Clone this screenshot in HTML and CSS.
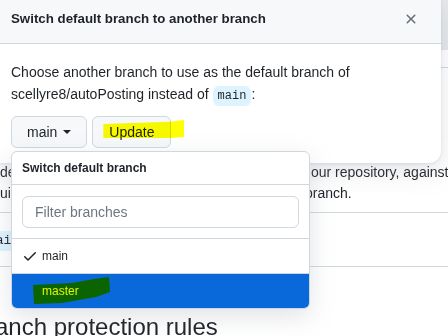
FILE: index.html
```html
<!DOCTYPE html>
<html lang="en">
<head>
    <meta charset="UTF-8">
    <meta name="viewport" content="width=device-width, initial-scale=1.0">
    <title>Default branch</title>
    <link rel="stylesheet" href="styles.css">
</head>
<body>
<div class="page">
    <div class="page-top">
        <div class="edge-btn"></div>
    </div>
    <div class="bg-text">
        <div class="bg-row">
            <span class="bg-left">default branch is considered the base branch in y</span>
            <span class="bg-right">our repository, against which all pull requests</span>
        </div>
        <div class="bg-row">
            <span class="bg-left">uires a different base b</span>
            <span class="bg-right">branch.</span>
        </div>
    </div>
    <div class="bg-code-row">
        <code class="bg-code">main</code>
    </div>
    <h2 class="bg-heading">Branch protection rules</h2>
</div>

<div class="modal">
    <div class="modal-header">
        <h1 class="modal-title">Switch default branch to another branch</h1>
        <button class="close-btn" aria-label="Close">
            <svg width="16" height="16" viewBox="0 0 16 16"><path fill="#656d76" d="M3.72 3.72a.75.75 0 0 1 1.06 0L8 6.94l3.22-3.22a.749.749 0 0 1 1.275.326.749.749 0 0 1-.215.734L9.06 8l3.22 3.22a.749.749 0 0 1-.326 1.275.749.749 0 0 1-.734-.215L8 9.06l-3.22 3.22a.751.751 0 0 1-1.042-.018.751.751 0 0 1-.018-1.042L6.94 8 3.72 4.78a.75.75 0 0 1 0-1.06Z"/></svg>
        </button>
    </div>
    <div class="modal-body">
        <p class="modal-text">Choose another branch to use as the default branch of scellyre8/autoPosting instead of <code class="pill">main</code>:</p>
        <div class="actions">
            <button class="btn">main <span class="caret"></span></button>
            <button class="btn btn-update">Update<span class="marker"></span></button>
        </div>
    </div>
</div>

<div class="dropdown">
    <div class="dropdown-header">Switch default branch</div>
    <div class="dropdown-filter">
        <input class="filter-input" type="text" placeholder="Filter branches">
    </div>
    <div class="dropdown-item">
        <svg class="check" width="16" height="16" viewBox="0 0 16 16"><path fill="#1f2328" d="M13.78 4.22a.75.75 0 0 1 0 1.06l-7.25 7.25a.75.75 0 0 1-1.06 0L2.22 9.28a.751.751 0 0 1 .018-1.042.751.751 0 0 1 1.042-.018L6 10.94l6.72-6.72a.75.75 0 0 1 1.06 0Z"/></svg>
        <span>main</span>
    </div>
    <div class="dropdown-item selected">
        <svg class="scribble" width="80" height="30" viewBox="0 0 80 30"><path fill="#0b6400" d="M1 9 L40 7 L62 3 L77 1 L78 16 L64 21 L30 27 L2 28 Z"/></svg>
        <span class="master-label">master</span>
    </div>
</div>
</body>
</html>
```

FILE: styles.css
```css
body {
    margin: 0;
    width: 448px;
    height: 336px;
    overflow: hidden;
    position: relative;
    background-color: #fff;
    color: #1f2328;
    font-family: "Liberation Sans", Arial, sans-serif;
    font-size: 14px;
}
.page-top {
    height: 67px;
    border-bottom: 1px solid #d0d7de;
    display: flex;
    justify-content: flex-end;
}
.edge-btn {
    width: 7px;
    height: 50px;
    background-color: #e6e8ea;
    border-left: 2px solid #c8ccd0;
}
.bg-text {
    margin-top: 94px;
    padding-bottom: 8px;
    border-bottom: 1px solid #d0d7de;
}
.bg-row {
    display: grid;
    grid-template-columns: 311px 1fr;
    line-height: 21px;
    white-space: nowrap;
}
.bg-row + .bg-row {
    grid-template-columns: 305px 1fr;
}
.bg-left,
.bg-right {
    overflow: hidden;
}
.bg-code-row {
    padding: 18px 0 15px;
    border-bottom: 1px solid #d0d7de;
}
.bg-code {
    display: inline-block;
    margin-left: -16px;
    padding: 0 4px;
    height: 20px;
    line-height: 20px;
    background-color: #ddf4ff;
    border-radius: 6px;
    font-family: "Liberation Mono", monospace;
    font-size: 13px;
}
.bg-heading {
    margin: 45px 0 0 -29px;
    font-size: 24px;
    font-weight: 400;
    line-height: 30px;
}
.modal {
    position: absolute;
    left: 0;
    top: 0;
    width: 441px;
    height: 163px;
    background-color: #fff;
    border-radius: 0 0 12px 0;
    box-shadow: 0 8px 24px rgba(140, 149, 159, 0.25), 0 1px 3px rgba(140, 149, 159, 0.2);
}
.modal-header {
    height: 44px;
    box-sizing: border-box;
    display: flex;
    align-items: center;
    justify-content: space-between;
    padding: 0 22px 0 11px;
    background-color: #f6f8fa;
    border-bottom: 1px solid #d0d7de;
}
.modal-title {
    margin: 0 0 6px 0;
    font-size: 13.3px;
    font-weight: 600;
}
.close-btn {
    border: none;
    background: none;
    padding: 0;
    display: flex;
    margin-bottom: 6px;
}
.modal-body {
    padding: 17px 11px 0;
}
.modal-text {
    margin: 0;
    line-height: 22px;
}
.pill {
    display: inline-block;
    padding: 0 5px;
    line-height: 20px;
    background-color: #ddf4ff;
    border-radius: 6px;
    font-family: "Liberation Mono", monospace;
    font-size: 12px;
    color: #1f2328;
}
.actions {
    display: flex;
    gap: 5px;
    margin-top: 10px;
}
.btn {
    position: relative;
    height: 32px;
    padding: 0 15px;
    display: flex;
    align-items: center;
    gap: 6px;
    background-color: #f6f8fa;
    border: 1px solid #d0d7de;
    border-radius: 6px;
    color: #1f2328;
    font-family: inherit;
    font-size: 14px;
    font-weight: 500;
}
.btn-update {
    width: 79px;
    justify-content: center;
}
.caret {
    width: 0;
    height: 0;
    border-left: 4px solid transparent;
    border-right: 4px solid transparent;
    border-top: 4px solid #1f2328;
}
.marker {
    position: absolute;
    left: 10px;
    top: 3px;
    width: 81px;
    height: 18px;
    background-color: #ffff00;
    mix-blend-mode: multiply;
    clip-path: polygon(0 22%, 82% 10%, 100% 0, 100% 95%, 82% 100%, 0 100%);
}
.dropdown {
    position: absolute;
    left: 11px;
    top: 151px;
    width: 299px;
    box-sizing: border-box;
    background-color: #fff;
    border: 1px solid #d0d7de;
    border-radius: 6px;
    overflow: hidden;
    box-shadow: 0 8px 24px rgba(140, 149, 159, 0.25);
}
.dropdown-header {
    height: 32px;
    display: flex;
    align-items: center;
    padding-left: 10px;
    border-bottom: 1px solid #d0d7de;
    font-size: 12px;
    font-weight: 600;
}
.dropdown-filter {
    padding: 11px 10px 10px;
    border-bottom: 1px solid #d0d7de;
}
.filter-input {
    width: 100%;
    height: 32px;
    box-sizing: border-box;
    padding: 0 12px;
    border: 1px solid #d0d7de;
    border-radius: 6px;
    font-family: inherit;
    font-size: 14px;
    color: #1f2328;
}
.filter-input::placeholder {
    color: #6e7781;
}
.dropdown-item {
    position: relative;
    height: 34px;
    display: flex;
    align-items: center;
    gap: 4px;
    padding-left: 10px;
    border-bottom: 1px solid #d0d7de;
    font-size: 12px;
}
.dropdown-item.selected {
    border-bottom: none;
    background-color: #0969da;
    padding-left: 30px;
}
.scribble {
    position: absolute;
    left: 20px;
    top: 2px;
}
.master-label {
    position: relative;
    color: #e4f400;
    font-weight: 500;
}
```
